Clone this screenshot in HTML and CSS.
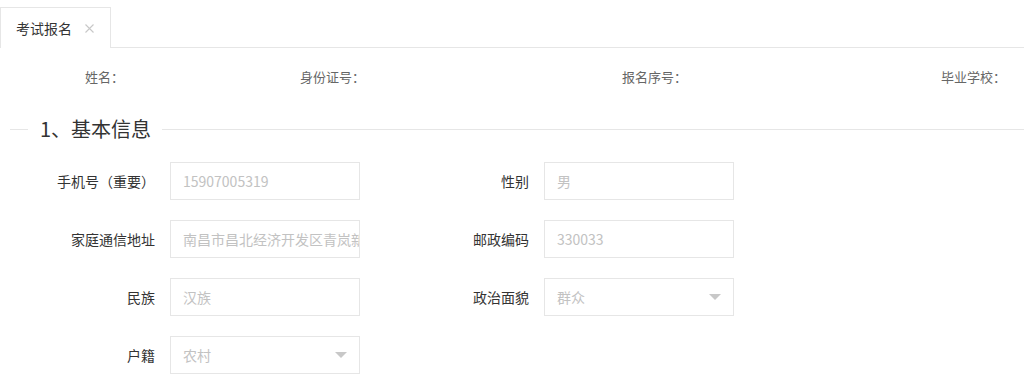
FILE: index.html
```html
<!DOCTYPE html>
<html lang="zh-CN">
<head>
<meta charset="utf-8">
<title>考试报名</title>
<link rel="stylesheet" href="styles.css">
</head>
<body>
<div class="tabs">
  <div class="tab">
    <span class="tab-title">考试报名</span>
    <svg class="tab-close" width="9" height="9" viewBox="0 0 9 9"><path d="M0.5 0.5L8.5 8.5M8.5 0.5L0.5 8.5" stroke="#c8c8c8" stroke-width="1.1" fill="none"/></svg>
  </div>
</div>

<div class="info">
  <div class="info-item w1">姓名：</div>
  <div class="info-item w2">身份证号：</div>
  <div class="info-item w3">报名序号：</div>
  <div class="info-item w4">毕业学校：</div>
</div>

<div class="section-title"><span class="section-text">1、基本信息</span></div>

<div class="form">
  <div class="form-row">
    <div class="field">
      <label class="field-label">手机号（重要）</label>
      <div class="field-input">15907005319</div>
    </div>
    <div class="field">
      <label class="field-label">性别</label>
      <div class="field-input">男</div>
    </div>
  </div>
  <div class="form-row">
    <div class="field">
      <label class="field-label">家庭通信地址</label>
      <div class="field-input">南昌市昌北经济开发区青岚新村</div>
    </div>
    <div class="field">
      <label class="field-label">邮政编码</label>
      <div class="field-input">330033</div>
    </div>
  </div>
  <div class="form-row">
    <div class="field">
      <label class="field-label">民族</label>
      <div class="field-input">汉族</div>
    </div>
    <div class="field">
      <label class="field-label">政治面貌</label>
      <div class="field-input select">群众<span class="caret"></span></div>
    </div>
  </div>
  <div class="form-row">
    <div class="field">
      <label class="field-label">户籍</label>
      <div class="field-input select">农村<span class="caret"></span></div>
    </div>
  </div>
</div>
</body>
</html>
```

FILE: styles.css
```css
html, body {
  margin: 0;
  padding: 0;
  background: #fff;
}
body {
  font-family: "Noto Sans CJK SC", "Microsoft YaHei", "Liberation Sans", sans-serif;
  font-size: 14px;
  color: #333;
  width: 1024px;
  height: 387px;
  overflow: hidden;
}

/* tabs */
.tabs {
  display: flex;
  padding-top: 7px;
  height: 40px;
  border-bottom: 1px solid #e6e6e6;
}
.tab {
  display: flex;
  align-items: center;
  box-sizing: border-box;
  width: 111px;
  height: 41px;
  padding: 0 0 0 15px;
  border: 1px solid #e6e6e6;
  border-bottom: none;
  background: #fff;
  margin-bottom: -1px;
}
.tab-title {
  font-size: 14px;
  color: #333;
  line-height: 20px;
}
.tab-close {
  margin-left: 13px;
}

/* info row */
.info {
  display: flex;
  padding-top: 19px;
  height: 20px;
  line-height: 20px;
  font-size: 13px;
  color: #666;
}
.info-item {
  text-align: right;
  flex: none;
  box-sizing: border-box;
}
.w1 { width: 124px; }
.w2 { width: 241px; }
.w3 { width: 322px; }
.w4 { width: 319px; }

/* section title */
.section-title {
  display: flex;
  align-items: center;
  margin-top: 29px;
  height: 26px;
}
.section-title::before {
  content: "";
  width: 18px;
  height: 1px;
  margin-left: 10px;
  background: #e6e6e6;
}
.section-title::after {
  content: "";
  flex: 1;
  height: 1px;
  background: #e6e6e6;
}
.section-text {
  padding: 0 11px 0 12px;
  font-size: 20px;
  line-height: 26px;
  color: #333;
}

/* form */
.form {
  margin-top: 20px;
  display: flex;
  flex-direction: column;
  gap: 20px;
}
.form-row {
  display: flex;
}
.field {
  display: flex;
  align-items: center;
  width: 374px;
}
.field-label {
  box-sizing: border-box;
  width: 170px;
  padding-right: 15px;
  text-align: right;
  font-size: 14px;
  color: #333;
}
.field-input {
  position: relative;
  box-sizing: border-box;
  width: 190px;
  height: 38px;
  border: 1px solid #e6e6e6;
  padding: 0 12px;
  line-height: 36px;
  font-size: 14px;
  color: #c2c2c2;
  white-space: nowrap;
  overflow: hidden;
}
.field-input.select {
  padding-right: 30px;
}
.caret {
  position: absolute;
  right: 12px;
  top: 15px;
  width: 0;
  height: 0;
  border-left: 6px solid transparent;
  border-right: 6px solid transparent;
  border-top: 6px solid #c8c8c8;
}
```
